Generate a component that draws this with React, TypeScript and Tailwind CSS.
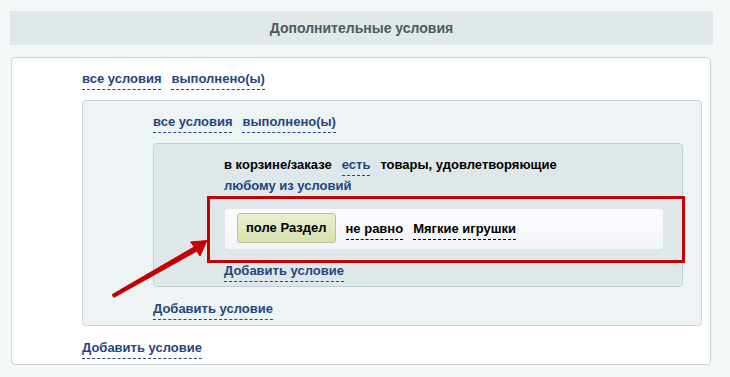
import React from "react";

const font = { fontFamily: '"Liberation Sans", Arial, sans-serif' };

const Link: React.FC<{ children: React.ReactNode; dark?: boolean }> = ({ children, dark }) => (
  <span
    className={`inline-block leading-4 pb-[2px] border-b border-dashed font-bold text-[13px] cursor-pointer ${
      dark ? "text-black border-black" : "text-[#24467f] border-[#24467f]"
    }`}
  >
    {children}
  </span>
);

const Text: React.FC<{ children: React.ReactNode; blue?: boolean }> = ({ children, blue }) => (
  <span className={`inline-block leading-4 font-bold text-[13px] ${blue ? "text-[#24467f]" : "text-black"}`}>
    {children}
  </span>
);

const LogicRow: React.FC = () => (
  <div className="flex items-start gap-[10px]">
    <Link>все условия</Link>
    <Link>выполнено(ы)</Link>
  </div>
);

const App: React.FC = () => {
  return (
    <div className="relative min-h-[377px] bg-[#f4f8f9] pt-[11px] pb-[12px]" style={font}>
      <div className="ml-[10px] w-[703px] h-[34px] bg-[#e0e8ea] flex items-center justify-center">
        <span className="font-bold text-[14px] text-[#4a5b60]">Дополнительные условия</span>
      </div>

      <div className="mt-[12px] ml-[11px] w-[700px] bg-white border border-[#c9d0d6] rounded-[4px] pl-[70px] pr-[8px] pt-[13px] pb-[5px]">
        <LogicRow />

        <div className="mt-[10px] bg-[#eef4f6] border border-[#cbd3d8] rounded-[4px] pl-[70px] pr-[18px] pt-[13px] pb-[5px]">
          <LogicRow />

          <div className="mt-[10px] bg-[#dee8ea] border border-[#c6d0d4] rounded-[4px] pl-[70px] pr-[18px] pt-[13px] pb-[4px]">
            <div className="flex items-start gap-[10px]">
              <Text>в корзине/заказе</Text>
              <Link>есть</Link>
              <Text>товары, удовлетворяющие</Text>
            </div>
            <div className="flex mt-[2px]">
              <Text blue>любому из условий</Text>
            </div>

            <div className="relative mt-[14px] bg-gradient-to-b from-[#fbfcfd] to-[#f3f5f8] border border-[#e2e6ea] rounded-[4px] pl-[12px] pt-[4px] pb-[6px] flex items-start">
              <div className="h-[30px] px-[8px] flex items-center bg-gradient-to-b from-[#eaf0cf] to-[#d7e1b0] border border-[#b9c393] rounded-[3px]">
                <span className="font-bold text-[13px] text-black">поле Раздел</span>
              </div>
              <div className="ml-[10px] flex items-start gap-[10px] pt-[8px]">
                <Link dark>не равно</Link>
                <Link dark>Мягкие игрушки</Link>
              </div>
              <div className="absolute left-[-18px] right-[-22px] top-[-13px] bottom-[-14px] border-[3px] border-[#c40000] pointer-events-none" />
            </div>

            <div className="flex mt-[13px]">
              <Link>Добавить условие</Link>
            </div>
          </div>

          <div className="flex mt-[14px]">
            <Link>Добавить условие</Link>
          </div>
        </div>

        <div className="flex mt-[14px]">
          <Link>Добавить условие</Link>
        </div>
      </div>

      <svg className="absolute left-0 top-0 pointer-events-none" width="730" height="377" viewBox="0 0 730 377">
        <polygon
          points="112.2,294.6 194.2,246.9 190.7,242 207,240.5 200,256 196.8,251.1 113.8,297.4"
          fill="#c40000"
          stroke="#c40000"
          strokeWidth="1"
          strokeLinejoin="round"
        />
      </svg>
    </div>
  );
};

export default App;
